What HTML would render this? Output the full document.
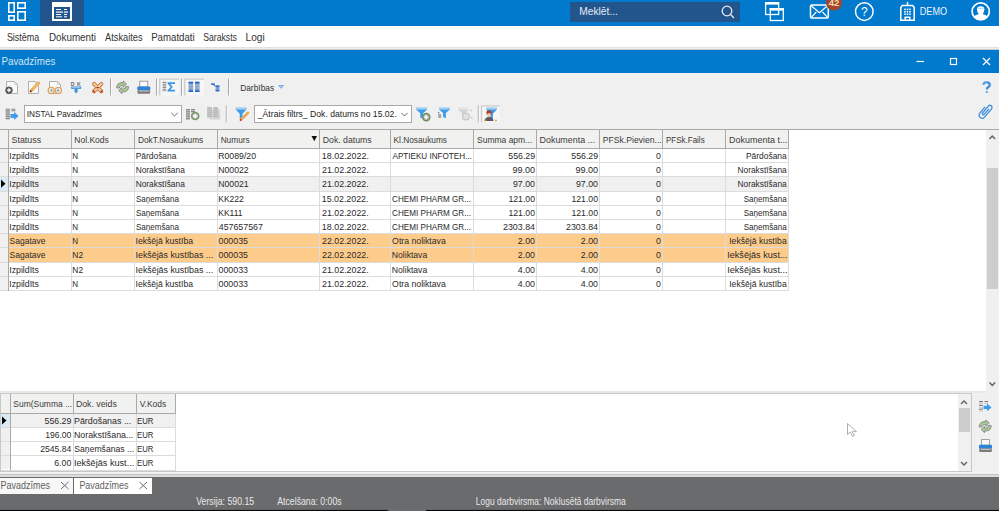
<!DOCTYPE html><html><head><meta charset="utf-8"><style>
*{margin:0;padding:0;box-sizing:border-box}
html,body{width:999px;height:511px;overflow:hidden;background:#f0f0f0;font-family:"Liberation Sans", sans-serif;}
.a{position:absolute}
svg{position:absolute;overflow:visible}
text{font-family:"Liberation Sans",sans-serif;white-space:pre}
</style></head><body><div class="a" style="left:0;top:0;width:999px;height:26px;background:#0179cc"></div>
<div class="a" style="left:40px;top:0;width:44px;height:26px;background:#23558d"></div>
<svg style="left:0;top:0" width="100" height="26"><g fill="none" stroke="#fff" stroke-width="1.6"><rect x="8.8" y="2.8" width="5.4" height="9.4"/><rect x="17.8" y="2.8" width="7.4" height="5.4"/><rect x="8.8" y="15.8" width="5.4" height="4.4"/><rect x="17.8" y="11.8" width="7.4" height="8.4"/></g><rect x="52" y="2" width="20" height="19" fill="#fff"/><rect x="54" y="7" width="16" height="12" fill="#23558d"/><g fill="#fff"><rect x="55.5" y="4" width="1.2" height="1"/><rect x="57.5" y="4" width="1.2" height="1"/><rect x="59.5" y="4" width="1.2" height="1"/><rect x="56" y="9" width="5" height="1"/><rect x="64" y="9" width="3" height="1"/><rect x="56" y="11.5" width="7" height="1.2"/><rect x="64" y="11.5" width="4" height="1.2"/><rect x="56" y="14" width="5" height="1"/><rect x="64" y="14" width="3" height="1"/><rect x="56" y="16.3" width="6" height="1"/><rect x="64" y="16.3" width="3" height="1"/></g></svg>
<div class="a" style="left:570px;top:2px;width:170px;height:20px;background:#23558d"></div>
<svg style="left:0;top:0" width="999" height="26"><g fill="none" stroke="#e6ecf4" stroke-width="1.3"><circle cx="727" cy="11" r="4.8"/><line x1="730.5" y1="14.5" x2="734" y2="18"/></g></svg>
<svg style="left:0;top:0" width="999" height="26"><g fill="none" stroke="#fff" stroke-width="1.3"><rect x="765.6" y="2.7" width="13" height="11.8"/><rect x="770.3" y="8.7" width="13" height="11.8"/></g><rect x="765" y="2.1" width="14.2" height="2.5" fill="#fff"/><rect x="769.7" y="8.1" width="14.2" height="2.5" fill="#fff"/><rect x="810.5" y="5" width="17.8" height="13" rx="1.2" fill="none" stroke="#fff" stroke-width="1.5"/><g fill="none" stroke="#fff" stroke-width="1.2"><polyline points="811.2,5.8 819.4,12.6 827.6,5.8"/><line x1="811.5" y1="17.2" x2="816.3" y2="12"/><line x1="827.3" y1="17.2" x2="822.5" y2="12"/></g><circle cx="834" cy="2.6" r="8" fill="#a4442a"/><text x="834" y="6.2" font-size="9.5" font-weight="bold" fill="#f4dcb0" text-anchor="middle">42</text><circle cx="864.3" cy="11.6" r="8.8" fill="none" stroke="#fff" stroke-width="1.5"/><text x="864.3" y="16" font-size="12" fill="#fff" text-anchor="middle">?</text><g fill="none" stroke="#fff" stroke-width="1.5"><path d="M900.8 20.2 V7.4 L902.3 5.6 H912.7 L914.2 7.4 V20.2 Z"/><line x1="907.5" y1="2" x2="907.5" y2="5.6"/><path d="M905.2 20.2 V17.2 H909.8 V20.2"/></g><g fill="#fff"><rect x="904.2" y="8.6" width="1.6" height="1.5"/><rect x="906.7" y="8.6" width="1.6" height="1.5"/><rect x="909.2" y="8.6" width="1.6" height="1.5"/><rect x="904.2" y="11" width="1.6" height="1.5"/><rect x="906.7" y="11" width="1.6" height="1.5"/><rect x="909.2" y="11" width="1.6" height="1.5"/><rect x="904.2" y="13.4" width="1.6" height="1.5"/><rect x="906.7" y="13.4" width="1.6" height="1.5"/><rect x="909.2" y="13.4" width="1.6" height="1.5"/></g><circle cx="980.7" cy="11.4" r="8.6" fill="none" stroke="#fff" stroke-width="1.7"/><path d="M973.8 17 Q974.8 15 978.4 14.3 V13.3 Q977 12 977 9.3 Q977 6.2 980.7 6.2 Q984.4 6.2 984.4 9.3 Q984.4 12 983 13.3 V14.3 Q986.6 15 987.6 17 Q985 20 980.7 20 Q976.4 20 973.8 17 Z" fill="#fff"/><path d="M978.2 8.3 H983.2" stroke="#7ab8e8" stroke-width="0.7"/></svg>
<div class="a" style="left:0;top:26px;width:999px;height:21px;background:#fff"></div>
<div class="a" style="left:0;top:47px;width:999px;height:1px;background:#e2e2e2"></div><div class="a" style="left:0;top:48px;width:999px;height:1px;background:#efefef"></div><div class="a" style="left:0;top:49px;width:999px;height:1px;background:#c9c9c9"></div>
<div class="a" style="left:0;top:50px;width:999px;height:23px;background:#0179cc"></div>
<svg style="left:0;top:0" width="999" height="80"><g fill="none" stroke="#fff" stroke-width="1.2"><line x1="916.5" y1="61.5" x2="924" y2="61.5"/><rect x="950.5" y="58.5" width="6" height="6"/><line x1="983" y1="58" x2="990" y2="65"/><line x1="990" y1="58" x2="983" y2="65"/></g></svg>
<svg style="left:0;top:0" width="999" height="130"><path d="M6.5 81.5 H14.5 L17.5 84.5 V93.5 H6.5 Z" fill="#f9f9f9" stroke="#b0b0b0" stroke-width="1"/><path d="M14.5 81.5 V84.5 H17.5" fill="none" stroke="#c8c8c8" stroke-width="0.8"/><circle cx="9" cy="90.2" r="3.3" fill="#5a5a5a" stroke="#4a4a4a" stroke-width="0.8"/><path d="M7 90.2 H11 M9 88.2 V92.2" stroke="#fff" stroke-width="1.3"/><path d="M28.5 81.5 H35.5 L38.5 84.5 V93.5 H28.5 Z" fill="#f9f9f9" stroke="#b0b0b0" stroke-width="1"/><path d="M35.5 81.5 V84.5 H38.5" fill="none" stroke="#c8c8c8" stroke-width="0.8"/><line x1="31.2" y1="90.8" x2="38.6" y2="83" stroke="#e9a94c" stroke-width="3" stroke-linecap="round"/><line x1="33" y1="89" x2="38.6" y2="83" stroke="#f3cc82" stroke-width="1"/><circle cx="30.7" cy="91.2" r="1" fill="#7a2a1a"/><path d="M49.5 81.5 H57.5 L60.5 84.5 V93.5 H49.5 Z" fill="#f9f9f9" stroke="#b0b0b0" stroke-width="1"/><path d="M57.5 81.5 V84.5 H60.5" fill="none" stroke="#c8c8c8" stroke-width="0.8"/><circle cx="51.2" cy="90.4" r="3.1" fill="#e4e4e4" stroke="#e0a04a" stroke-width="1.1"/><circle cx="58.4" cy="90.4" r="3.1" fill="#e4e4e4" stroke="#e0a04a" stroke-width="1.1"/><path d="M50 90.4 L52.3 88.8 V92 Z M59.6 90.4 L57.3 88.8 V92 Z" fill="#9a9a9a"/><text x="70.8" y="85.6" font-size="5.2" font-weight="bold" fill="#6a6a6a" font-family="Liberation Sans">D</text><text x="77" y="85.6" font-size="5.2" font-weight="bold" fill="#6a6a6a" font-family="Liberation Sans">K</text><rect x="71" y="86.4" width="10.2" height="2.6" rx="1" fill="#3c8fdf"/><rect x="72.2" y="87.3" width="7.8" height="0.9" fill="#a8d4f8"/><path d="M74.6 89 H77.6 V92 L76.1 93.2 L74.6 92 Z" fill="#3c8fdf"/><path d="M94 83.8 L101.4 91.4 M101.4 83.8 L94 91.4" stroke="#c8744a" stroke-width="3.9" stroke-linecap="round"/><path d="M94 83.8 L101.4 91.4 M101.4 83.8 L94 91.4" stroke="#f1cd96" stroke-width="2.2" stroke-linecap="round"/><path d="M93.3 90.7 L94.6 92.1 M102.1 90.7 L100.8 92.1 M96.8 87.6 L98.6 87.6" stroke="#b8342a" stroke-width="1.3" stroke-linecap="round"/><line x1="110.5" y1="78.5" x2="110.5" y2="95.5" stroke="#a8a8a8" stroke-width="1"/><line x1="111.5" y1="78.5" x2="111.5" y2="95.5" stroke="#fafafa" stroke-width="1"/><path d="M116.6 88 Q116.6 83 121.5 82.6 H123.3 V80.9 L126.6 84.1 L123.3 87.3 V85.6 H121.6 Q119.6 85.8 119.4 88 Z" fill="#a7c78b" stroke="#7a7388" stroke-width="0.7"/><path d="M128.6 86.6 Q128.6 91.6 123.7 92 H121.9 V93.7 L118.6 90.5 L121.9 87.3 V89 H123.6 Q125.6 88.8 125.8 86.6 Z" fill="#a7c78b" stroke="#7a7388" stroke-width="0.7"/><rect x="139.8" y="81.2" width="8" height="5.6" fill="#fbfbfb" stroke="#8a8a8a" stroke-width="0.8"/><rect x="137.3" y="86.4" width="13" height="4" rx="1" fill="#2e84d8"/><rect x="137.5" y="90.2" width="12.6" height="3.5" rx="0.8" fill="#7a7a7a"/><rect x="139" y="90.5" width="9.6" height="1" fill="#c8c8c8"/><line x1="156.5" y1="78.5" x2="156.5" y2="95.5" stroke="#a8a8a8" stroke-width="1"/><line x1="157.5" y1="78.5" x2="157.5" y2="95.5" stroke="#fafafa" stroke-width="1"/><rect x="159" y="78.4" width="20" height="17.19999999999999" fill="#f6f6f6"/><path d="M159.75 95.6 V79.15 H179" fill="none" stroke="#cbcbcb" stroke-width="1.3"/><rect x="162.6" y="81.8" width="3.6" height="10" fill="#d6d6d6"/><rect x="162.6" y="81.80" width="3.6" height="1.25" fill="#8e8e8e"/><rect x="162.6" y="84.30" width="3.6" height="1.25" fill="#8e8e8e"/><rect x="162.6" y="86.80" width="3.6" height="1.25" fill="#8e8e8e"/><rect x="162.6" y="89.30" width="3.6" height="1.25" fill="#8e8e8e"/><path d="M167.5 82.2 H175 V84 H170.3 L172.8 86.9 L170.3 89.8 H175 V91.6 H167.5 V90.3 L170.6 86.9 L167.5 83.5 Z" fill="#3c95e4"/><line x1="181.5" y1="78.5" x2="181.5" y2="95.5" stroke="#a8a8a8" stroke-width="1"/><line x1="182.5" y1="78.5" x2="182.5" y2="95.5" stroke="#fafafa" stroke-width="1"/><rect x="184" y="78.4" width="20" height="17.19999999999999" fill="#f6f6f6"/><path d="M184.75 95.6 V79.15 H204" fill="none" stroke="#cbcbcb" stroke-width="1.3"/><rect x="188.6" y="81.8" width="4.5" height="10.2" fill="#7f9ccc"/><rect x="188.6" y="81.8" width="4.5" height="1.6" fill="#1e6bc4"/><rect x="188.6" y="90.4" width="4.5" height="1.6" fill="#1e6bc4"/><rect x="188.6" y="84.8" width="4.5" height="0.8" fill="#b8c8e0"/><rect x="188.6" y="87.5" width="4.5" height="0.8" fill="#b8c8e0"/><rect x="195" y="81.8" width="4.5" height="10.2" fill="#7f9ccc"/><rect x="195" y="81.8" width="4.5" height="1.6" fill="#1e6bc4"/><rect x="195" y="90.4" width="4.5" height="1.6" fill="#1e6bc4"/><rect x="195" y="84.8" width="4.5" height="0.8" fill="#b8c8e0"/><rect x="195" y="87.5" width="4.5" height="0.8" fill="#b8c8e0"/><rect x="211.2" y="83.3" width="3.5" height="1.6" fill="#1e6bc4"/><path d="M213.5 84.8 L215.5 86.3" stroke="#1e6bc4" stroke-width="1"/><rect x="215.6" y="85.5" width="3.8" height="5.8" fill="#7f9ccc"/><rect x="215.6" y="85.5" width="3.8" height="1.3" fill="#1e6bc4"/><rect x="215.6" y="90" width="3.8" height="1.3" fill="#1e6bc4"/><line x1="228.5" y1="78.5" x2="228.5" y2="95.5" stroke="#a8a8a8" stroke-width="1"/><line x1="229.5" y1="78.5" x2="229.5" y2="95.5" stroke="#fafafa" stroke-width="1"/><polygon points="278,85.3 284.2,85.3 281.1,88.8" fill="#4a9ee6"/><polygon points="279.3,86 282.9,86 281.1,88" fill="#a8d2f6"/><rect x="5.7" y="108.8" width="4.2" height="11" fill="#c6c6c6"/><rect x="5.7" y="108.80" width="4.2" height="0.92" fill="#858585"/><rect x="5.7" y="110.63" width="4.2" height="0.92" fill="#858585"/><rect x="5.7" y="112.47" width="4.2" height="0.92" fill="#858585"/><rect x="5.7" y="114.30" width="4.2" height="0.92" fill="#858585"/><rect x="5.7" y="116.13" width="4.2" height="0.92" fill="#858585"/><rect x="5.7" y="117.97" width="4.2" height="0.92" fill="#858585"/><rect x="11.4" y="108.8" width="3.9" height="2.9" fill="#c6c6c6"/><rect x="11.4" y="108.80" width="3.9" height="0.72" fill="#858585"/><rect x="11.4" y="110.25" width="3.9" height="0.72" fill="#858585"/><path d="M10.5 114 H14.2 V111.8 L18.4 116 L14.2 120 V118 H10.5 Z" fill="#3d9be9"/><rect x="24.5" y="105.5" width="157" height="17" fill="#fff" stroke="#a9a9a9" stroke-width="1"/><polyline points="171.3,112.9 174.5,116 177.7,112.9" fill="none" stroke="#6a6a6a" stroke-width="1"/><rect x="186" y="109" width="4" height="11" fill="#c6c6c6"/><rect x="186" y="109.00" width="4" height="0.92" fill="#858585"/><rect x="186" y="110.83" width="4" height="0.92" fill="#858585"/><rect x="186" y="112.67" width="4" height="0.92" fill="#858585"/><rect x="186" y="114.50" width="4" height="0.92" fill="#858585"/><rect x="186" y="116.33" width="4" height="0.92" fill="#858585"/><rect x="186" y="118.17" width="4" height="0.92" fill="#858585"/><rect x="191" y="109" width="4" height="4" fill="#c6c6c6"/><rect x="191" y="109.00" width="4" height="1.00" fill="#858585"/><rect x="191" y="111.00" width="4" height="1.00" fill="#858585"/><circle cx="195.2" cy="116" r="3.6" fill="#b8b8b8" stroke="#7a9a66" stroke-width="1.5"/><path d="M193.1 116 H197.3 M195.2 113.9 V118.1" stroke="#fff" stroke-width="1.4"/><rect x="209.5" y="109.5" width="10.6" height="10" fill="#d4d4d4"/><rect x="207.3" y="107.2" width="4.6" height="10.4" fill="#c8c8c8"/><rect x="213.3" y="107.2" width="4.6" height="10.4" fill="#c8c8c8"/><rect x="207.3" y="107.6" width="4.6" height="10" fill="#d8d8d8"/><rect x="207.3" y="107.60" width="4.6" height="1.00" fill="#a8a8a8"/><rect x="207.3" y="109.60" width="4.6" height="1.00" fill="#a8a8a8"/><rect x="207.3" y="111.60" width="4.6" height="1.00" fill="#a8a8a8"/><rect x="207.3" y="113.60" width="4.6" height="1.00" fill="#a8a8a8"/><rect x="207.3" y="115.60" width="4.6" height="1.00" fill="#a8a8a8"/><rect x="213.3" y="107.6" width="4.6" height="10" fill="#d8d8d8"/><rect x="213.3" y="107.60" width="4.6" height="1.00" fill="#a8a8a8"/><rect x="213.3" y="109.60" width="4.6" height="1.00" fill="#a8a8a8"/><rect x="213.3" y="111.60" width="4.6" height="1.00" fill="#a8a8a8"/><rect x="213.3" y="113.60" width="4.6" height="1.00" fill="#a8a8a8"/><rect x="213.3" y="115.60" width="4.6" height="1.00" fill="#a8a8a8"/><line x1="226.3" y1="105.7" x2="226.3" y2="122.3" stroke="#a8a8a8" stroke-width="1"/><line x1="227.3" y1="105.7" x2="227.3" y2="122.3" stroke="#fafafa" stroke-width="1"/><path d="M235.8 107.8 H246.4 V109.6 L242.50000000000003 113.8 V119.8 L239.70000000000002 118.6 V113.8 L235.8 109.6 Z" fill="#3d9be9"/><rect x="235.8" y="107.8" width="10.6" height="1.8" fill="#9fd0f5"/><line x1="241" y1="119.6" x2="248" y2="112.8" stroke="#e9a94c" stroke-width="2.6" stroke-linecap="round"/><circle cx="240.6" cy="120" r="0.9" fill="#b8302a"/><rect x="254.5" y="105.5" width="157" height="17" fill="#fff" stroke="#a9a9a9" stroke-width="1"/><polyline points="401.5,112.9 404.5,116 407.5,112.9" fill="none" stroke="#6a6a6a" stroke-width="1"/><path d="M416.2 107.8 H427.09999999999997 V109.6 L423.04999999999995 113.3 V118.8 L420.25 117.6 V113.3 L416.2 109.6 Z" fill="#3d9be9"/><rect x="416.2" y="107.8" width="10.9" height="1.8" fill="#9fd0f5"/><circle cx="426.2" cy="117.1" r="3.6" fill="#b0b0b0" stroke="#6f8f5b" stroke-width="1.5"/><path d="M424.1 117.1 H428.3 M426.2 115 V119.2" stroke="#fff" stroke-width="1.4"/><path d="M439 107.8 H449.9 V109.6 L445.84999999999997 113.05 V118.3 L443.05 117.1 V113.05 L439 109.6 Z" fill="#3d9be9"/><rect x="439" y="107.8" width="10.9" height="1.8" fill="#9fd0f5"/><rect x="438.2" y="112" width="1.2" height="1.5" fill="#777"/><rect x="438.2" y="114.5" width="3" height="1.2" fill="#777"/><rect x="438.2" y="116.4" width="3" height="1.2" fill="#777"/><path d="M458 107.8 H468.9 V109.6 L464.84999999999997 113.05 V118.3 L462.05 117.1 V113.05 L458 109.6 Z" fill="#d2d2d2"/><rect x="458" y="107.8" width="10.9" height="1.8" fill="#e6e6e6"/><circle cx="466" cy="116.5" r="3.6" fill="#e0e0e0" stroke="#c0c0c0" stroke-width="1"/><path d="M470 111 L471.5 110 M471 117.5 L472.5 118.5" stroke="#9a9a9a" stroke-width="0.8"/><line x1="478.3" y1="105.3" x2="478.3" y2="122.7" stroke="#a8a8a8" stroke-width="1"/><line x1="479.3" y1="105.3" x2="479.3" y2="122.7" stroke="#fafafa" stroke-width="1"/><rect x="480.8" y="105.2" width="19.0" height="17.200000000000003" fill="#f6f6f6"/><path d="M481.55 122.4 V105.95 H499.8" fill="none" stroke="#cbcbcb" stroke-width="1.3"/><path d="M486 107.8 H497 V109.6 L492.9 113.8 V119.8 L490.1 118.6 V113.8 L486 109.6 Z" fill="#3d9be9"/><rect x="486" y="107.8" width="11" height="1.8" fill="#9fd0f5"/><circle cx="489" cy="112.8" r="2.6" fill="#b23a2a"/><circle cx="489" cy="115" r="2" fill="#e8c4a0"/><path d="M484.5 121 Q485 117 489 117 Q493 117 493.5 121 Z" fill="#5a5a6a"/><circle cx="485" cy="120.4" r="1" fill="#f0a040"/><circle cx="496" cy="120.4" r="1" fill="#f0a040"/></svg><svg style="left:0;top:0" width="999" height="130"><path d="M983.6 84.8 Q983.6 82.3 986.7 82.3 Q989.8 82.3 989.8 84.8 Q989.8 86.4 988 87.3 Q986.8 88 986.8 89.6" fill="none" stroke="#3a8fe0" stroke-width="2.2"/><path d="M984.3 84.6 Q984.6 83 986.7 83" fill="none" stroke="#b8dcf8" stroke-width="0.8"/><circle cx="986.8" cy="92" r="1.1" fill="#4a9ee6"/><g transform="translate(985.8 110.8) rotate(40)"><path d="M1.1 -3.5 V3.8 A1.1 1.1 0 0 1 -1.1 3.8 V-5.2 A2.1 2.1 0 0 1 3.1 -5.2 V5.6 A3.1 3.1 0 0 1 -3.1 5.6 V-2.5" fill="none" stroke="#3a8fe0" stroke-width="1.3"/></g></svg>
<div class="a" style="left:0;top:129px;width:986px;height:262px;background:#fff"></div>
<div class="a" style="left:0;top:129px;width:999px;height:1px;background:#a9a9a9"></div>
<div class="a" style="left:986px;top:130px;width:13px;height:263px;background:#f0f0f0"></div>
<div class="a" style="left:987px;top:168px;width:11px;height:121px;background:#cdcdcd"></div>
<svg style="left:0;top:0" width="999" height="400"><g fill="none" stroke="#606060" stroke-width="1.4"><polyline points="989.5,139 992.3,136 995.1,139"/><polyline points="989.5,382.5 992.3,385.5 995.1,382.5"/></g></svg>
<div class="a" style="left:0;top:130px;width:788px;height:18px;background:#f1f1ef"></div>
<div class="a" style="left:0;top:148px;width:789px;height:1px;background:#a9a9a9"></div>
<div class="a" style="left:8px;top:130px;width:1px;height:18px;background:#a9a9a9"></div>
<div class="a" style="left:71px;top:130px;width:1px;height:18px;background:#a9a9a9"></div>
<div class="a" style="left:134px;top:130px;width:1px;height:18px;background:#a9a9a9"></div>
<div class="a" style="left:217px;top:130px;width:1px;height:18px;background:#a9a9a9"></div>
<div class="a" style="left:319px;top:130px;width:1px;height:18px;background:#a9a9a9"></div>
<div class="a" style="left:390px;top:130px;width:1px;height:18px;background:#a9a9a9"></div>
<div class="a" style="left:473px;top:130px;width:1px;height:18px;background:#a9a9a9"></div>
<div class="a" style="left:536px;top:130px;width:1px;height:18px;background:#a9a9a9"></div>
<div class="a" style="left:599px;top:130px;width:1px;height:18px;background:#a9a9a9"></div>
<div class="a" style="left:662px;top:130px;width:1px;height:18px;background:#a9a9a9"></div>
<div class="a" style="left:725px;top:130px;width:1px;height:18px;background:#a9a9a9"></div>
<div class="a" style="left:788px;top:130px;width:1px;height:18px;background:#a9a9a9"></div>
<svg style="left:0;top:0" width="400" height="150"><polygon points="311.5,136 317,136 314.25,141.3" fill="#111"/></svg>
<div class="a" style="left:9px;top:149.00px;width:779px;height:13.21px;background:#fff"></div>
<div class="a" style="left:0;top:149.00px;width:8px;height:13.21px;background:#f0f0f0"></div>
<div class="a" style="left:0;top:162.21px;width:789px;height:1px;background:#dcdcdc"></div>
<div class="a" style="left:9px;top:163.21px;width:779px;height:13.21px;background:#fff"></div>
<div class="a" style="left:0;top:163.21px;width:8px;height:13.21px;background:#f0f0f0"></div>
<div class="a" style="left:0;top:176.42px;width:789px;height:1px;background:#dcdcdc"></div>
<div class="a" style="left:9px;top:177.42px;width:779px;height:13.21px;background:#f0f0f0"></div>
<div class="a" style="left:0;top:177.42px;width:8px;height:13.21px;background:#dbeaf7"></div>
<div class="a" style="left:0;top:190.63px;width:789px;height:1px;background:#dcdcdc"></div>
<div class="a" style="left:9px;top:191.63px;width:779px;height:13.21px;background:#fff"></div>
<div class="a" style="left:0;top:191.63px;width:8px;height:13.21px;background:#f0f0f0"></div>
<div class="a" style="left:0;top:204.84px;width:789px;height:1px;background:#dcdcdc"></div>
<div class="a" style="left:9px;top:205.84px;width:779px;height:13.21px;background:#fff"></div>
<div class="a" style="left:0;top:205.84px;width:8px;height:13.21px;background:#f0f0f0"></div>
<div class="a" style="left:0;top:219.05px;width:789px;height:1px;background:#dcdcdc"></div>
<div class="a" style="left:9px;top:220.05px;width:779px;height:13.21px;background:#fff"></div>
<div class="a" style="left:0;top:220.05px;width:8px;height:13.21px;background:#f0f0f0"></div>
<div class="a" style="left:0;top:233.26px;width:789px;height:1px;background:#dcdcdc"></div>
<div class="a" style="left:9px;top:234.26px;width:779px;height:13.21px;background:#fecc8a"></div>
<div class="a" style="left:0;top:234.26px;width:8px;height:13.21px;background:#f0f0f0"></div>
<div class="a" style="left:0;top:247.47px;width:789px;height:1px;background:#dcdcdc"></div>
<div class="a" style="left:9px;top:248.47px;width:779px;height:13.21px;background:#fecc8a"></div>
<div class="a" style="left:0;top:248.47px;width:8px;height:13.21px;background:#f0f0f0"></div>
<div class="a" style="left:0;top:261.68px;width:789px;height:1px;background:#dcdcdc"></div>
<div class="a" style="left:9px;top:262.68px;width:779px;height:13.21px;background:#fff"></div>
<div class="a" style="left:0;top:262.68px;width:8px;height:13.21px;background:#f0f0f0"></div>
<div class="a" style="left:0;top:275.89px;width:789px;height:1px;background:#dcdcdc"></div>
<div class="a" style="left:9px;top:276.89px;width:779px;height:13.21px;background:#fff"></div>
<div class="a" style="left:0;top:276.89px;width:8px;height:13.21px;background:#f0f0f0"></div>
<div class="a" style="left:0;top:290.10px;width:789px;height:1px;background:#dcdcdc"></div>
<div class="a" style="left:8px;top:149px;width:1px;height:142.10px;background:#dcdcdc"></div>
<div class="a" style="left:71px;top:149px;width:1px;height:142.10px;background:#dcdcdc"></div>
<div class="a" style="left:134px;top:149px;width:1px;height:142.10px;background:#dcdcdc"></div>
<div class="a" style="left:217px;top:149px;width:1px;height:142.10px;background:#dcdcdc"></div>
<div class="a" style="left:319px;top:149px;width:1px;height:142.10px;background:#dcdcdc"></div>
<div class="a" style="left:390px;top:149px;width:1px;height:142.10px;background:#dcdcdc"></div>
<div class="a" style="left:473px;top:149px;width:1px;height:142.10px;background:#dcdcdc"></div>
<div class="a" style="left:536px;top:149px;width:1px;height:142.10px;background:#dcdcdc"></div>
<div class="a" style="left:599px;top:149px;width:1px;height:142.10px;background:#dcdcdc"></div>
<div class="a" style="left:662px;top:149px;width:1px;height:142.10px;background:#dcdcdc"></div>
<div class="a" style="left:725px;top:149px;width:1px;height:142.10px;background:#dcdcdc"></div>
<div class="a" style="left:788px;top:149px;width:1px;height:142.10px;background:#dcdcdc"></div>
<div class="a" style="left:8px;top:149px;width:1px;height:142.10px;background:#a9a9a9"></div>
<svg style="left:0;top:0" width="20" height="200"><polygon points="1,179.6 1,187.8 5.5,183.7" fill="#000"/></svg>
<div class="a" style="left:0;top:391px;width:986px;height:2px;background:#e8e8e8"></div>
<div class="a" style="left:0;top:393px;width:972px;height:79px;background:#fff;border:1px solid #c8c8c8"></div>
<div class="a" style="left:958px;top:394px;width:13px;height:77px;background:#f0f0f0"></div>
<div class="a" style="left:958.5px;top:408px;width:11.5px;height:24px;background:#cdcdcd"></div>
<svg style="left:0;top:0" width="999" height="511"><g fill="none" stroke="#606060" stroke-width="1.4"><polyline points="961,404 964,401 967,404"/><polyline points="961,462 964,465 967,462"/></g></svg>
<div class="a" style="left:1px;top:394px;width:174px;height:19px;background:#f1f1ef"></div>
<div class="a" style="left:1px;top:413px;width:175px;height:1px;background:#a9a9a9"></div>
<div class="a" style="left:10px;top:394px;width:1px;height:19px;background:#a9a9a9"></div>
<div class="a" style="left:73px;top:394px;width:1px;height:19px;background:#a9a9a9"></div>
<div class="a" style="left:136px;top:394px;width:1px;height:19px;background:#a9a9a9"></div>
<div class="a" style="left:175px;top:394px;width:1px;height:19px;background:#a9a9a9"></div>
<div class="a" style="left:11px;top:414.10px;width:164px;height:13.10px;background:#f0f0f0"></div>
<div class="a" style="left:1px;top:414.10px;width:9px;height:13.10px;background:#dbeaf7"></div>
<div class="a" style="left:1px;top:427.20px;width:175px;height:1px;background:#dcdcdc"></div>
<div class="a" style="left:11px;top:428.20px;width:164px;height:13.10px;background:#fff"></div>
<div class="a" style="left:1px;top:428.20px;width:9px;height:13.10px;background:#f0f0f0"></div>
<div class="a" style="left:1px;top:441.30px;width:175px;height:1px;background:#dcdcdc"></div>
<div class="a" style="left:11px;top:442.30px;width:164px;height:13.10px;background:#fff"></div>
<div class="a" style="left:1px;top:442.30px;width:9px;height:13.10px;background:#f0f0f0"></div>
<div class="a" style="left:1px;top:455.40px;width:175px;height:1px;background:#dcdcdc"></div>
<div class="a" style="left:11px;top:456.40px;width:164px;height:13.10px;background:#fff"></div>
<div class="a" style="left:1px;top:456.40px;width:9px;height:13.10px;background:#f0f0f0"></div>
<div class="a" style="left:1px;top:469.50px;width:175px;height:1px;background:#dcdcdc"></div>
<div class="a" style="left:10px;top:414px;width:1px;height:56px;background:#dcdcdc"></div>
<div class="a" style="left:73px;top:414px;width:1px;height:56px;background:#dcdcdc"></div>
<div class="a" style="left:136px;top:414px;width:1px;height:56px;background:#dcdcdc"></div>
<div class="a" style="left:175px;top:414px;width:1px;height:56px;background:#dcdcdc"></div>
<div class="a" style="left:10px;top:414px;width:1px;height:56px;background:#a9a9a9"></div>
<svg style="left:0;top:0" width="20" height="511"><polygon points="2,416.5 2,424.5 6.5,420.5" fill="#000"/></svg>
<svg style="left:0;top:0" width="999" height="511"><g><rect x="979" y="401.0" width="4" height="1.1" fill="#7a7a7a"/><rect x="979" y="402.9" width="4" height="1.1" fill="#c8c8c8"/><rect x="979" y="404.8" width="4" height="1.1" fill="#7a7a7a"/><rect x="979" y="406.7" width="4" height="1.1" fill="#c8c8c8"/><rect x="979" y="408.6" width="4" height="1.1" fill="#7a7a7a"/><rect x="979" y="410.5" width="4" height="1.1" fill="#c8c8c8"/><rect x="984.5" y="401.0" width="3.6" height="1.1" fill="#7a7a7a"/><rect x="984.5" y="402.9" width="3.6" height="1.1" fill="#c8c8c8"/><path d="M983.5 405.8 H987 V403.6 L991.6 407.4 L987 411.2 V409 H983.5 Z" fill="#3d9be9"/></g><path d="M979.2 427 Q979.2 422 984.1 421.6 H985.9 V419.9 L989.2 423.1 L985.9 426.3 V424.6 H984.2 Q982.2 424.8 982 427 Z" fill="#a7c78b" stroke="#7a7388" stroke-width="0.7"/><path d="M991.2 425.6 Q991.2 430.6 986.3 431 H984.5 V432.7 L981.2 429.5 L984.5 426.3 V428 H986.2 Q988.2 427.8 988.4 425.6 Z" fill="#a7c78b" stroke="#7a7388" stroke-width="0.7"/><rect x="981.5" y="439.6" width="8" height="5.6" fill="#fbfbfb" stroke="#8a8a8a" stroke-width="0.8"/><rect x="979" y="444.8" width="13" height="4" rx="1" fill="#2e84d8"/><rect x="979.2" y="448.6" width="12.6" height="3.5" rx="0.8" fill="#7a7a7a"/><rect x="980.7" y="448.9" width="9.6" height="1" fill="#c8c8c8"/></svg>
<svg style="left:0;top:0" width="999" height="511"><path d="M847.5 423.5 L847.5 434.5 L850.2 432 L852.6 436.5 L854.3 435.7 L852.2 431.6 L856.5 431.6 Z" fill="#fff" stroke="#9a9a9a" stroke-width="0.8"/></svg>
<div class="a" style="left:0;top:472px;width:999px;height:2px;background:#f2f2f2"></div>
<div class="a" style="left:0;top:474px;width:999px;height:1px;background:#c2c2c2"></div>
<div class="a" style="left:0;top:475px;width:999px;height:2px;background:#dcdcde"></div>
<div class="a" style="left:0;top:477px;width:999px;height:32px;background:#6a6b6d"></div>
<div class="a" style="left:0;top:509px;width:999px;height:1px;background:#606163"></div>
<div class="a" style="left:0;top:510px;width:999px;height:1px;background:#0a0a0a"></div>
<div class="a" style="left:388px;top:509px;width:38px;height:2px;background:#6a6b6d"></div>
<div class="a" style="left:0;top:477.5px;width:73px;height:16.5px;background:#f7f7f7"></div>
<div class="a" style="left:74px;top:477.5px;width:78px;height:16.5px;background:#fff"></div>
<svg style="left:0;top:0" width="999" height="511"><g stroke="#666" stroke-width="0.95"><line x1="61" y1="482" x2="68.5" y2="489"/><line x1="68.5" y1="482" x2="61" y2="489"/><line x1="139.5" y1="482" x2="147" y2="489"/><line x1="147" y1="482" x2="139.5" y2="489"/></g></svg>
<svg style="left:0;top:0" width="999" height="511"><text x="579.18" y="14.80" font-size="10.174" textLength="38.78" lengthAdjust="spacingAndGlyphs" fill="#e6ecf5" >Meklēt...</text><text x="919.77" y="14.90" font-size="11.337" textLength="27.39" lengthAdjust="spacingAndGlyphs" fill="#eef3fa" >DEMO</text><text x="6.90" y="40.50" font-size="10.174" textLength="32.32" lengthAdjust="spacingAndGlyphs" fill="#333" >Sistēma</text><text x="48.91" y="40.50" font-size="10.174" textLength="47.03" lengthAdjust="spacingAndGlyphs" fill="#333" >Dokumenti</text><text x="105.00" y="40.50" font-size="10.174" textLength="37.65" lengthAdjust="spacingAndGlyphs" fill="#333" >Atskaites</text><text x="151.13" y="40.50" font-size="10.174" textLength="43.53" lengthAdjust="spacingAndGlyphs" fill="#333" >Pamatdati</text><text x="203.21" y="40.50" font-size="10.174" textLength="33.69" lengthAdjust="spacingAndGlyphs" fill="#333" >Saraksts</text><text x="245.49" y="40.50" font-size="10.174" textLength="19.18" lengthAdjust="spacingAndGlyphs" fill="#333" >Logi</text><text x="1.42" y="64.60" font-size="10.465" textLength="53.90" lengthAdjust="spacingAndGlyphs" fill="#d6e6f5" >Pavadzīmes</text><text x="240.13" y="90.60" font-size="9.884" textLength="34.05" lengthAdjust="spacingAndGlyphs" fill="#333" >Darbības</text><text x="26.76" y="116.50" font-size="9.593" textLength="75.13" lengthAdjust="spacingAndGlyphs" fill="#222" >INSTAL Pavadzīmes</text><text x="257.83" y="116.80" font-size="9.593" textLength="138.98" lengthAdjust="spacingAndGlyphs" fill="#222" >_Ātrais filtrs_ Dok. datums no 15.02.</text><text x="11.60" y="142.50" font-size="9.884" textLength="29.51" lengthAdjust="spacingAndGlyphs" fill="#3a3a3a" >Statuss</text><text x="74.32" y="142.50" font-size="9.884" textLength="34.46" lengthAdjust="spacingAndGlyphs" fill="#3a3a3a" >Nol.Kods</text><text x="137.93" y="142.50" font-size="9.884" textLength="65.37" lengthAdjust="spacingAndGlyphs" fill="#3a3a3a" >DokT.Nosaukums</text><text x="220.64" y="142.50" font-size="9.884" textLength="29.06" lengthAdjust="spacingAndGlyphs" fill="#3a3a3a" >Numurs</text><text x="322.80" y="142.50" font-size="9.884" textLength="48.79" lengthAdjust="spacingAndGlyphs" fill="#3a3a3a" >Dok. datums</text><text x="393.54" y="142.50" font-size="9.884" textLength="53.47" lengthAdjust="spacingAndGlyphs" fill="#3a3a3a" >Kl.Nosaukums</text><text x="477.12" y="142.50" font-size="9.884" textLength="55.06" lengthAdjust="spacingAndGlyphs" fill="#3a3a3a" >Summa apm...</text><text x="539.59" y="142.50" font-size="9.884" textLength="55.46" lengthAdjust="spacingAndGlyphs" fill="#3a3a3a" >Dokumenta ...</text><text x="602.71" y="142.50" font-size="9.884" textLength="59.08" lengthAdjust="spacingAndGlyphs" fill="#3a3a3a" >PFSk.Pievien...</text><text x="665.96" y="142.50" font-size="9.884" textLength="38.71" lengthAdjust="spacingAndGlyphs" fill="#3a3a3a" >PFSk.Fails</text><text x="729.08" y="142.50" font-size="9.884" textLength="58.35" lengthAdjust="spacingAndGlyphs" fill="#3a3a3a" >Dokumenta t...</text><text x="9.21" y="158.90" font-size="9.157" textLength="29.70" lengthAdjust="spacingAndGlyphs" fill="#2a2a2a" >Izpildīts</text><text x="72.36" y="158.90" font-size="9.157" textLength="5.82" lengthAdjust="spacingAndGlyphs" fill="#2a2a2a" >N</text><text x="135.63" y="158.90" font-size="9.157" textLength="40.79" lengthAdjust="spacingAndGlyphs" fill="#2a2a2a" >Pārdošana</text><text x="218.20" y="158.90" font-size="9.157" textLength="37.82" lengthAdjust="spacingAndGlyphs" fill="#2a2a2a" >R0089/20</text><text x="321.83" y="158.90" font-size="9.157" textLength="47.10" lengthAdjust="spacingAndGlyphs" fill="#2a2a2a" >18.02.2022.</text><text x="392.50" y="158.90" font-size="9.157" textLength="79.36" lengthAdjust="spacingAndGlyphs" fill="#2a2a2a" >APTIEKU INFOTEH...</text><text x="508.25" y="158.90" font-size="9.157" textLength="26.83" lengthAdjust="spacingAndGlyphs" fill="#2a2a2a" >556.29</text><text x="571.25" y="158.90" font-size="9.157" textLength="26.83" lengthAdjust="spacingAndGlyphs" fill="#2a2a2a" >556.29</text><text x="656.11" y="158.90" font-size="9.157" textLength="4.91" lengthAdjust="spacingAndGlyphs" fill="#2a2a2a" >0</text><text x="745.93" y="158.90" font-size="9.157" textLength="40.79" lengthAdjust="spacingAndGlyphs" fill="#2a2a2a" >Pārdošana</text><text x="9.21" y="173.11" font-size="9.157" textLength="29.70" lengthAdjust="spacingAndGlyphs" fill="#2a2a2a" >Izpildīts</text><text x="72.36" y="173.11" font-size="9.157" textLength="5.82" lengthAdjust="spacingAndGlyphs" fill="#2a2a2a" >N</text><text x="135.63" y="173.11" font-size="9.157" textLength="49.18" lengthAdjust="spacingAndGlyphs" fill="#2a2a2a" >Norakstīšana</text><text x="218.20" y="173.11" font-size="9.157" textLength="30.50" lengthAdjust="spacingAndGlyphs" fill="#2a2a2a" >N00022</text><text x="322.06" y="173.11" font-size="9.157" textLength="46.62" lengthAdjust="spacingAndGlyphs" fill="#2a2a2a" >21.02.2022.</text><text x="512.39" y="173.11" font-size="9.157" textLength="22.65" lengthAdjust="spacingAndGlyphs" fill="#2a2a2a" >99.00</text><text x="575.39" y="173.11" font-size="9.157" textLength="22.65" lengthAdjust="spacingAndGlyphs" fill="#2a2a2a" >99.00</text><text x="656.11" y="173.11" font-size="9.157" textLength="4.91" lengthAdjust="spacingAndGlyphs" fill="#2a2a2a" >0</text><text x="737.53" y="173.11" font-size="9.157" textLength="49.18" lengthAdjust="spacingAndGlyphs" fill="#2a2a2a" >Norakstīšana</text><text x="9.21" y="187.32" font-size="9.157" textLength="29.70" lengthAdjust="spacingAndGlyphs" fill="#2a2a2a" >Izpildīts</text><text x="72.36" y="187.32" font-size="9.157" textLength="5.82" lengthAdjust="spacingAndGlyphs" fill="#2a2a2a" >N</text><text x="135.63" y="187.32" font-size="9.157" textLength="49.18" lengthAdjust="spacingAndGlyphs" fill="#2a2a2a" >Norakstīšana</text><text x="218.20" y="187.32" font-size="9.157" textLength="30.50" lengthAdjust="spacingAndGlyphs" fill="#2a2a2a" >N00021</text><text x="322.06" y="187.32" font-size="9.157" textLength="46.62" lengthAdjust="spacingAndGlyphs" fill="#2a2a2a" >21.02.2022.</text><text x="512.94" y="187.32" font-size="9.157" textLength="22.09" lengthAdjust="spacingAndGlyphs" fill="#2a2a2a" >97.00</text><text x="575.94" y="187.32" font-size="9.157" textLength="22.09" lengthAdjust="spacingAndGlyphs" fill="#2a2a2a" >97.00</text><text x="656.11" y="187.32" font-size="9.157" textLength="4.91" lengthAdjust="spacingAndGlyphs" fill="#2a2a2a" >0</text><text x="737.53" y="187.32" font-size="9.157" textLength="49.18" lengthAdjust="spacingAndGlyphs" fill="#2a2a2a" >Norakstīšana</text><text x="9.21" y="201.53" font-size="9.157" textLength="29.70" lengthAdjust="spacingAndGlyphs" fill="#2a2a2a" >Izpildīts</text><text x="72.36" y="201.53" font-size="9.157" textLength="5.82" lengthAdjust="spacingAndGlyphs" fill="#2a2a2a" >N</text><text x="135.94" y="201.53" font-size="9.157" textLength="42.98" lengthAdjust="spacingAndGlyphs" fill="#2a2a2a" >Saņemšana</text><text x="218.22" y="201.53" font-size="9.157" textLength="25.60" lengthAdjust="spacingAndGlyphs" fill="#2a2a2a" >KK222</text><text x="321.84" y="201.53" font-size="9.157" textLength="46.62" lengthAdjust="spacingAndGlyphs" fill="#2a2a2a" >15.02.2022.</text><text x="392.09" y="201.53" font-size="9.157" textLength="78.86" lengthAdjust="spacingAndGlyphs" fill="#2a2a2a" >CHEMI PHARM GR...</text><text x="508.45" y="201.53" font-size="9.157" textLength="26.54" lengthAdjust="spacingAndGlyphs" fill="#2a2a2a" >121.00</text><text x="571.45" y="201.53" font-size="9.157" textLength="26.54" lengthAdjust="spacingAndGlyphs" fill="#2a2a2a" >121.00</text><text x="656.11" y="201.53" font-size="9.157" textLength="4.91" lengthAdjust="spacingAndGlyphs" fill="#2a2a2a" >0</text><text x="743.74" y="201.53" font-size="9.157" textLength="42.98" lengthAdjust="spacingAndGlyphs" fill="#2a2a2a" >Saņemšana</text><text x="9.21" y="215.74" font-size="9.157" textLength="29.70" lengthAdjust="spacingAndGlyphs" fill="#2a2a2a" >Izpildīts</text><text x="72.36" y="215.74" font-size="9.157" textLength="5.82" lengthAdjust="spacingAndGlyphs" fill="#2a2a2a" >N</text><text x="135.94" y="215.74" font-size="9.157" textLength="42.98" lengthAdjust="spacingAndGlyphs" fill="#2a2a2a" >Saņemšana</text><text x="218.22" y="215.74" font-size="9.157" textLength="24.33" lengthAdjust="spacingAndGlyphs" fill="#2a2a2a" >KK111</text><text x="322.06" y="215.74" font-size="9.157" textLength="46.62" lengthAdjust="spacingAndGlyphs" fill="#2a2a2a" >21.02.2022.</text><text x="392.09" y="215.74" font-size="9.157" textLength="78.86" lengthAdjust="spacingAndGlyphs" fill="#2a2a2a" >CHEMI PHARM GR...</text><text x="508.45" y="215.74" font-size="9.157" textLength="26.54" lengthAdjust="spacingAndGlyphs" fill="#2a2a2a" >121.00</text><text x="571.45" y="215.74" font-size="9.157" textLength="26.54" lengthAdjust="spacingAndGlyphs" fill="#2a2a2a" >121.00</text><text x="656.11" y="215.74" font-size="9.157" textLength="4.91" lengthAdjust="spacingAndGlyphs" fill="#2a2a2a" >0</text><text x="743.74" y="215.74" font-size="9.157" textLength="42.98" lengthAdjust="spacingAndGlyphs" fill="#2a2a2a" >Saņemšana</text><text x="9.21" y="229.95" font-size="9.157" textLength="29.70" lengthAdjust="spacingAndGlyphs" fill="#2a2a2a" >Izpildīts</text><text x="72.36" y="229.95" font-size="9.157" textLength="5.82" lengthAdjust="spacingAndGlyphs" fill="#2a2a2a" >N</text><text x="135.94" y="229.95" font-size="9.157" textLength="42.98" lengthAdjust="spacingAndGlyphs" fill="#2a2a2a" >Saņemšana</text><text x="218.72" y="229.95" font-size="9.157" textLength="44.23" lengthAdjust="spacingAndGlyphs" fill="#2a2a2a" >457657567</text><text x="321.83" y="229.95" font-size="9.157" textLength="47.10" lengthAdjust="spacingAndGlyphs" fill="#2a2a2a" >18.02.2022.</text><text x="392.09" y="229.95" font-size="9.157" textLength="78.86" lengthAdjust="spacingAndGlyphs" fill="#2a2a2a" >CHEMI PHARM GR...</text><text x="503.04" y="229.95" font-size="9.157" textLength="31.92" lengthAdjust="spacingAndGlyphs" fill="#2a2a2a" >2303.84</text><text x="566.04" y="229.95" font-size="9.157" textLength="31.92" lengthAdjust="spacingAndGlyphs" fill="#2a2a2a" >2303.84</text><text x="656.11" y="229.95" font-size="9.157" textLength="4.91" lengthAdjust="spacingAndGlyphs" fill="#2a2a2a" >0</text><text x="743.74" y="229.95" font-size="9.157" textLength="42.98" lengthAdjust="spacingAndGlyphs" fill="#2a2a2a" >Saņemšana</text><text x="9.62" y="244.16" font-size="9.157" textLength="35.91" lengthAdjust="spacingAndGlyphs" fill="#2a2a2a" >Sagatave</text><text x="72.36" y="244.16" font-size="9.157" textLength="5.82" lengthAdjust="spacingAndGlyphs" fill="#2a2a2a" >N</text><text x="135.52" y="244.16" font-size="9.157" textLength="57.48" lengthAdjust="spacingAndGlyphs" fill="#2a2a2a" >Iekšējā kustība</text><text x="218.55" y="244.16" font-size="9.157" textLength="29.49" lengthAdjust="spacingAndGlyphs" fill="#2a2a2a" >000035</text><text x="322.06" y="244.16" font-size="9.157" textLength="46.62" lengthAdjust="spacingAndGlyphs" fill="#2a2a2a" >22.02.2022.</text><text x="392.11" y="244.16" font-size="9.157" textLength="53.69" lengthAdjust="spacingAndGlyphs" fill="#2a2a2a" >Otra noliktava</text><text x="517.84" y="244.16" font-size="9.157" textLength="17.18" lengthAdjust="spacingAndGlyphs" fill="#2a2a2a" >2.00</text><text x="580.84" y="244.16" font-size="9.157" textLength="17.18" lengthAdjust="spacingAndGlyphs" fill="#2a2a2a" >2.00</text><text x="656.11" y="244.16" font-size="9.157" textLength="4.91" lengthAdjust="spacingAndGlyphs" fill="#2a2a2a" >0</text><text x="729.22" y="244.16" font-size="9.157" textLength="57.48" lengthAdjust="spacingAndGlyphs" fill="#2a2a2a" >Iekšējā kustība</text><text x="9.62" y="258.37" font-size="9.157" textLength="35.91" lengthAdjust="spacingAndGlyphs" fill="#2a2a2a" >Sagatave</text><text x="72.32" y="258.37" font-size="9.157" textLength="10.80" lengthAdjust="spacingAndGlyphs" fill="#2a2a2a" >N2</text><text x="135.50" y="258.37" font-size="9.157" textLength="77.71" lengthAdjust="spacingAndGlyphs" fill="#2a2a2a" >Iekšējās kustības ...</text><text x="218.55" y="258.37" font-size="9.157" textLength="29.49" lengthAdjust="spacingAndGlyphs" fill="#2a2a2a" >000035</text><text x="322.06" y="258.37" font-size="9.157" textLength="46.62" lengthAdjust="spacingAndGlyphs" fill="#2a2a2a" >22.02.2022.</text><text x="391.81" y="258.37" font-size="9.157" textLength="35.41" lengthAdjust="spacingAndGlyphs" fill="#2a2a2a" >Noliktava</text><text x="517.84" y="258.37" font-size="9.157" textLength="17.18" lengthAdjust="spacingAndGlyphs" fill="#2a2a2a" >2.00</text><text x="580.84" y="258.37" font-size="9.157" textLength="17.18" lengthAdjust="spacingAndGlyphs" fill="#2a2a2a" >2.00</text><text x="656.11" y="258.37" font-size="9.157" textLength="4.91" lengthAdjust="spacingAndGlyphs" fill="#2a2a2a" >0</text><text x="727.18" y="258.37" font-size="9.157" textLength="60.38" lengthAdjust="spacingAndGlyphs" fill="#2a2a2a" >Iekšējās kust...</text><text x="9.21" y="272.58" font-size="9.157" textLength="29.70" lengthAdjust="spacingAndGlyphs" fill="#2a2a2a" >Izpildīts</text><text x="72.32" y="272.58" font-size="9.157" textLength="10.80" lengthAdjust="spacingAndGlyphs" fill="#2a2a2a" >N2</text><text x="135.50" y="272.58" font-size="9.157" textLength="77.71" lengthAdjust="spacingAndGlyphs" fill="#2a2a2a" >Iekšējās kustības ...</text><text x="218.55" y="272.58" font-size="9.157" textLength="29.49" lengthAdjust="spacingAndGlyphs" fill="#2a2a2a" >000033</text><text x="322.06" y="272.58" font-size="9.157" textLength="46.62" lengthAdjust="spacingAndGlyphs" fill="#2a2a2a" >21.02.2022.</text><text x="391.81" y="272.58" font-size="9.157" textLength="35.41" lengthAdjust="spacingAndGlyphs" fill="#2a2a2a" >Noliktava</text><text x="517.84" y="272.58" font-size="9.157" textLength="17.18" lengthAdjust="spacingAndGlyphs" fill="#2a2a2a" >4.00</text><text x="580.84" y="272.58" font-size="9.157" textLength="17.18" lengthAdjust="spacingAndGlyphs" fill="#2a2a2a" >4.00</text><text x="656.11" y="272.58" font-size="9.157" textLength="4.91" lengthAdjust="spacingAndGlyphs" fill="#2a2a2a" >0</text><text x="727.18" y="272.58" font-size="9.157" textLength="60.38" lengthAdjust="spacingAndGlyphs" fill="#2a2a2a" >Iekšējās kust...</text><text x="9.21" y="286.79" font-size="9.157" textLength="29.70" lengthAdjust="spacingAndGlyphs" fill="#2a2a2a" >Izpildīts</text><text x="72.36" y="286.79" font-size="9.157" textLength="5.82" lengthAdjust="spacingAndGlyphs" fill="#2a2a2a" >N</text><text x="135.52" y="286.79" font-size="9.157" textLength="57.48" lengthAdjust="spacingAndGlyphs" fill="#2a2a2a" >Iekšējā kustība</text><text x="218.55" y="286.79" font-size="9.157" textLength="29.49" lengthAdjust="spacingAndGlyphs" fill="#2a2a2a" >000033</text><text x="322.06" y="286.79" font-size="9.157" textLength="46.62" lengthAdjust="spacingAndGlyphs" fill="#2a2a2a" >21.02.2022.</text><text x="392.11" y="286.79" font-size="9.157" textLength="53.69" lengthAdjust="spacingAndGlyphs" fill="#2a2a2a" >Otra noliktava</text><text x="517.84" y="286.79" font-size="9.157" textLength="17.18" lengthAdjust="spacingAndGlyphs" fill="#2a2a2a" >4.00</text><text x="580.84" y="286.79" font-size="9.157" textLength="17.18" lengthAdjust="spacingAndGlyphs" fill="#2a2a2a" >4.00</text><text x="656.11" y="286.79" font-size="9.157" textLength="4.91" lengthAdjust="spacingAndGlyphs" fill="#2a2a2a" >0</text><text x="729.22" y="286.79" font-size="9.157" textLength="57.48" lengthAdjust="spacingAndGlyphs" fill="#2a2a2a" >Iekšējā kustība</text><text x="13.32" y="407.30" font-size="9.884" textLength="58.75" lengthAdjust="spacingAndGlyphs" fill="#3a3a3a" >Sum(Summa ...</text><text x="75.90" y="407.30" font-size="9.884" textLength="40.89" lengthAdjust="spacingAndGlyphs" fill="#3a3a3a" >Dok. veids</text><text x="139.76" y="407.30" font-size="9.884" textLength="26.46" lengthAdjust="spacingAndGlyphs" fill="#3a3a3a" >V.Kods</text><text x="44.55" y="423.70" font-size="9.157" textLength="26.83" lengthAdjust="spacingAndGlyphs" fill="#2a2a2a" >556.29</text><text x="73.99" y="423.70" font-size="9.157" textLength="57.34" lengthAdjust="spacingAndGlyphs" fill="#2a2a2a" >Pārdošanas ...</text><text x="136.98" y="423.70" font-size="9.157" textLength="16.38" lengthAdjust="spacingAndGlyphs" fill="#2a2a2a" >EUR</text><text x="45.16" y="437.80" font-size="9.157" textLength="26.13" lengthAdjust="spacingAndGlyphs" fill="#2a2a2a" >196.00</text><text x="73.99" y="437.80" font-size="9.157" textLength="59.35" lengthAdjust="spacingAndGlyphs" fill="#2a2a2a" >Norakstīšana...</text><text x="136.98" y="437.80" font-size="9.157" textLength="16.38" lengthAdjust="spacingAndGlyphs" fill="#2a2a2a" >EUR</text><text x="40.27" y="451.90" font-size="9.157" textLength="30.98" lengthAdjust="spacingAndGlyphs" fill="#2a2a2a" >2545.84</text><text x="74.31" y="451.90" font-size="9.157" textLength="59.89" lengthAdjust="spacingAndGlyphs" fill="#2a2a2a" >Saņemšanas ...</text><text x="136.98" y="451.90" font-size="9.157" textLength="16.38" lengthAdjust="spacingAndGlyphs" fill="#2a2a2a" >EUR</text><text x="54.26" y="466.00" font-size="9.157" textLength="17.06" lengthAdjust="spacingAndGlyphs" fill="#2a2a2a" >6.00</text><text x="73.88" y="466.00" font-size="9.157" textLength="60.38" lengthAdjust="spacingAndGlyphs" fill="#2a2a2a" >Iekšējās kust...</text><text x="136.98" y="466.00" font-size="9.157" textLength="16.38" lengthAdjust="spacingAndGlyphs" fill="#2a2a2a" >EUR</text><text x="0.58" y="489.20" font-size="10.465" textLength="49.41" lengthAdjust="spacingAndGlyphs" fill="#606060" >Pavadzīmes</text><text x="79.39" y="489.20" font-size="10.465" textLength="49.10" lengthAdjust="spacingAndGlyphs" fill="#606060" >Pavadzīmes</text><text x="196.16" y="505.20" font-size="10.174" textLength="58.10" lengthAdjust="spacingAndGlyphs" fill="#e8e8e8" >Versija: 590.15</text><text x="277.30" y="505.20" font-size="10.174" textLength="64.29" lengthAdjust="spacingAndGlyphs" fill="#e8e8e8" >Atcelšana: 0:00s</text><text x="475.82" y="505.20" font-size="10.174" textLength="149.98" lengthAdjust="spacingAndGlyphs" fill="#e8e8e8" >Logu darbvirsma: Noklusētā darbvirsma</text></svg></body></html>
